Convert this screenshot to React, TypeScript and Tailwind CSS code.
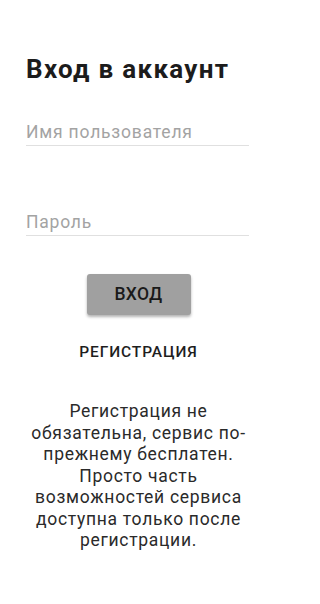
import React from 'react'

export default function App() {
  return (
    <div
      className="w-[277px] h-[604px] bg-white text-[#212121] overflow-hidden"
      style={{ fontFamily: 'Roboto, "Noto Sans", sans-serif' }}
    >
      <div className="pl-[26px] pr-[28px] pt-[54px]">
        <h1 className="text-[26px] leading-[30px] font-bold tracking-[1.3px] text-[#1c1c1c]">Вход в аккаунт</h1>
        <input
          type="text"
          placeholder="Имя пользователя"
          className="mt-[34px] block w-full h-[28px] p-0 text-[17.5px] tracking-[0.8px] border-b border-[#e0e0e0] outline-none placeholder:text-[#a3a3a3]"
        />
        <input
          type="password"
          placeholder="Пароль"
          className="mt-[62px] block w-full h-[28px] p-0 text-[17.5px] tracking-[0.8px] border-b border-[#e0e0e0] outline-none placeholder:text-[#a3a3a3]"
        />
      </div>
      <div className="flex flex-col items-center">
        <button className="mt-[38px] w-[104px] h-[41px] rounded-[3px] bg-[#a0a0a0] text-[17.5px] font-medium tracking-[0.3px] text-[#1a1a1a] shadow-[0_2px_3px_rgba(0,0,0,0.3)]">
          ВХОД
        </button>
        <div className="mt-[27px] text-[15.5px] leading-[20px] font-medium tracking-[0.9px] text-[#1e1e1e]">
          РЕГИСТРАЦИЯ
        </div>
        <p className="mt-[39px] px-[24px] text-center text-[17.5px] leading-[21.5px] tracking-[0.7px] text-[#2a2a2a]">
          Регистрация не обязательна, сервис по-прежнему бесплатен. Просто часть возможностей сервиса доступна только после регистрации.
        </p>
      </div>
    </div>
  )
}
